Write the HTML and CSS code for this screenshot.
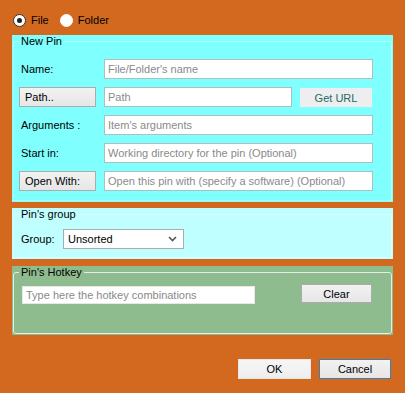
FILE: index.html
```html
<!DOCTYPE html>
<html>
<head>
<meta charset="utf-8">
<link rel="stylesheet" href="styles.css">
</head>
<body>
<div class="dialog">
  <div class="radios">
    <label class="radio"><span class="dot checked"></span>File</label>
    <label class="radio"><span class="dot"></span>Folder</label>
  </div>

  <div class="panel newpin">
    <fieldset class="box">
      <legend>New Pin</legend>
      <div class="form">
        <span class="lbl">Name:</span>
        <div class="input wide"><span class="ph">File/Folder's name</span></div>

        <button class="btn left">Path..</button>
        <div class="pathrow">
          <div class="input path"><span class="ph">Path</span></div>
          <button class="flat">Get URL</button>
        </div>

        <span class="lbl">Arguments :</span>
        <div class="input wide"><span class="ph">Item's arguments</span></div>

        <span class="lbl">Start in:</span>
        <div class="input wide"><span class="ph">Working directory for the pin (Optional)</span></div>

        <button class="btn left">Open With:</button>
        <div class="input wide"><span class="ph">Open this pin with (specify a software) (Optional)</span></div>
      </div>
    </fieldset>
  </div>

  <div class="panel group">
    <fieldset class="box">
      <legend>Pin's group</legend>
      <div class="grouprow">
        <span class="lbl">Group:</span>
        <div class="select">
          <span>Unsorted</span>
          <svg width="9" height="6" viewBox="0 0 9 6"><path d="M1 1 L4.5 4.5 L8 1" fill="none" stroke="#555" stroke-width="1.6"/></svg>
        </div>
      </div>
    </fieldset>
  </div>

  <div class="panel hotkey">
    <fieldset class="box light">
      <legend>Pin's Hotkey</legend>
      <div class="hotrow">
        <div class="input hk"><span class="ph">Type here the hotkey combinations</span></div>
        <button class="btn clear">Clear</button>
      </div>
    </fieldset>
  </div>

  <div class="actions">
    <button class="btn ok">OK</button>
    <button class="btn cancel">Cancel</button>
  </div>
</div>
</body>
</html>
```

FILE: styles.css
```css
* { box-sizing: border-box; }
html, body { margin: 0; padding: 0; }
body {
  width: 405px;
  height: 393px;
  background: #D2691E;
  font-family: "Liberation Sans", Arial, sans-serif;
  font-size: 11px;
  color: #000;
  overflow: hidden;
}
.dialog { padding-top: 13px; }

.radios { display: flex; align-items: center; height: 14px; padding-left: 13px; }
.radio { display: flex; align-items: center; line-height: 14px; }
.radio + .radio { margin-left: 11px; }
.dot {
  width: 13px; height: 13px; border-radius: 50%;
  background: #fff; border: 1px solid #fff;
  margin-right: 5px; position: relative;
}
.dot.checked { border-color: #333; }
.dot.checked::after {
  content: ""; position: absolute; left: 3px; top: 3px;
  width: 5px; height: 5px; border-radius: 50%; background: #222;
}

.panel { margin: 0 12px; width: 381px; }
.newpin { margin-top: 8px; height: 167px; background: #80FFFF; }
.group { margin-top: 6px; height: 51px; background: #C0FFFF; }
.hotkey { margin-top: 7px; height: 69px; background: #8FBC8F; }

.box {
  margin: 0 1px;
  padding: 0 0 0 5px;
  border: 1px solid rgba(255,255,255,0.35);
  height: 100%;
  min-width: 0;
}
.newpin .box { height: 166px; }
.group .box { height: 50px; }
.box.light { border-color: #E4EEE4; border-radius: 3px; height: 68px; }
legend { padding: 0 2px; line-height: 12px; font-size: 11px; }

.form {
  padding-top: 12px;
  display: grid;
  grid-template-columns: 77px 269px;
  column-gap: 8px;
  row-gap: 8px;
  grid-auto-rows: 20px;
}
.lbl { padding-left: 2px; display: flex; align-items: center; }
.input {
  height: 20px; background: #fff; border: 1px solid #ABC1C1;
  display: flex; align-items: center; padding-left: 3px;
  white-space: nowrap; overflow: hidden;
}
.ph { color: #8A8A8A; }
.pathrow { display: flex; gap: 8px; }
.input.path { width: 188px; }
.flat {
  width: 72px; height: 19px; margin-top: 1px;
  background: #EEEEEE; border: none; color: #206A6A;
  font: inherit; padding: 0;
}
.btn {
  height: 20px; font: inherit; color: #000; padding: 0;
  border: 1px solid #ACACAC;
  background: linear-gradient(#F2F2F2, #E6E6E6);
}
.btn.left { text-align: left; padding-left: 5px; }

.grouprow { padding-top: 6px; display: flex; align-items: center; height: 32px; }
.grouprow .lbl { width: 44px; height: 20px; }
.select {
  width: 121px; height: 20px; background: #fff; border: 1px solid #ABABAB;
  display: flex; align-items: center; justify-content: space-between;
  padding: 0 6px 0 4px;
}

.hotrow { padding-top: 6px; display: flex; align-items: flex-start; }
.input.hk { width: 233px; height: 18px; margin-left: 3px; margin-top: 2px; border-color: #E8E8E8; }
.btn.clear { width: 71px; height: 19px; margin-left: 46px; }

.actions { display: flex; justify-content: flex-end; gap: 8px; padding-right: 14px; margin-top: 24px; }
.btn.ok { width: 73px; border-color: #E6E6E6; background: linear-gradient(#F6F6F6, #EEEEEE); }
.btn.cancel { width: 72px; border-color: #3C7FB1; }
```
